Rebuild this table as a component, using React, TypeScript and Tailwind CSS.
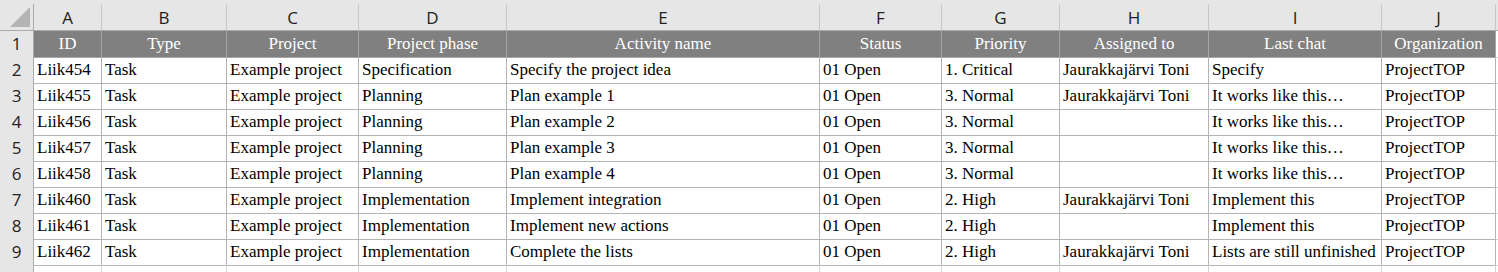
import React from "react";

const cols = [68, 125, 132, 148, 313, 122, 118, 149, 173, 114];
const letters = ["A", "B", "C", "D", "E", "F", "G", "H", "I", "J"];
const headers = [
  "ID",
  "Type",
  "Project",
  "Project phase",
  "Activity name",
  "Status",
  "Priority",
  "Assigned to",
  "Last chat",
  "Organization",
];
const rows: string[][] = [
  ["Liik454", "Task", "Example project", "Specification", "Specify the project idea", "01 Open", "1. Critical", "Jaurakkajärvi Toni", "Specify", "ProjectTOP"],
  ["Liik455", "Task", "Example project", "Planning", "Plan example 1", "01 Open", "3. Normal", "Jaurakkajärvi Toni", "It works like this…", "ProjectTOP"],
  ["Liik456", "Task", "Example project", "Planning", "Plan example 2", "01 Open", "3. Normal", "", "It works like this…", "ProjectTOP"],
  ["Liik457", "Task", "Example project", "Planning", "Plan example 3", "01 Open", "3. Normal", "", "It works like this…", "ProjectTOP"],
  ["Liik458", "Task", "Example project", "Planning", "Plan example 4", "01 Open", "3. Normal", "", "It works like this…", "ProjectTOP"],
  ["Liik460", "Task", "Example project", "Implementation", "Implement integration", "01 Open", "2. High", "Jaurakkajärvi Toni", "Implement this", "ProjectTOP"],
  ["Liik461", "Task", "Example project", "Implementation", "Implement new actions", "01 Open", "2. High", "", "Implement this", "ProjectTOP"],
  ["Liik462", "Task", "Example project", "Implementation", "Complete the lists", "01 Open", "2. High", "Jaurakkajärvi Toni", "Lists are still unfinished", "ProjectTOP"],
];

const gridCols = "grid-cols-[34px_68px_125px_132px_148px_313px_122px_118px_149px_173px_114px_1fr]";

export default function App() {
  return (
    <div className="w-[1498px] h-[272px] overflow-hidden bg-white">
      {/* Column letters */}
      <div className={`grid ${gridCols} h-[31px] bg-[#e6e6e6] border-b border-[#ababab]`}>
        <div className="relative border-r border-[#ababab] mt-[4px]">
          <svg className="absolute right-[3px] bottom-[3px]" width="20" height="20" viewBox="0 0 20 20">
            <polygon points="20,0 20,20 0,20" fill="#b4b4b4" />
          </svg>
        </div>
        {letters.map((l) => (
          <div
            key={l}
            className="mt-[4px] border-r border-[#c8c8c8] flex items-center justify-center text-[length:17px] text-[#222] font-['Open_Sans',sans-serif] leading-none"
          >
            {l}
          </div>
        ))}
        <div className="mt-[4px]" />
      </div>
      {/* Header row */}
      <div className={`grid ${gridCols} h-[26px]`}>
        <div className="bg-[#e6e6e6] border-r border-b border-[#ababab] flex items-center justify-center text-[length:17px] text-[#222] font-['Open_Sans',sans-serif]">
          1
        </div>
        {headers.map((h) => (
          <div
            key={h}
            className="bg-[#808080] border-r border-b border-[#a6a6a6] flex items-center justify-center text-white text-[length:17px] font-['Liberation_Serif',serif] whitespace-nowrap overflow-hidden"
          >
            {h}
          </div>
        ))}
        <div className="border-b border-[#d4d4d4]" />
      </div>
      {rows.map((r, i) => (
        <div key={i} className={`grid ${gridCols} h-[26px]`}>
          <div className="bg-[#e6e6e6] border-r border-b border-[#ababab] flex items-center justify-center text-[length:17px] text-[#222] font-['Open_Sans',sans-serif]">
            {i + 2}
          </div>
          {r.map((c, j) => (
            <div
              key={j}
              className="border-r border-b border-[#b4b4b4] flex items-center pl-[3px] text-black text-[length:17px] font-['Liberation_Serif',serif] whitespace-nowrap overflow-hidden"
            >
              {c}
            </div>
          ))}
          <div className="border-b border-[#d4d4d4]" />
        </div>
      ))}
      <div className={`grid ${gridCols} h-[26px]`}>
        <div className="bg-[#e6e6e6] border-r border-[#ababab]" />
        {cols.map((_, j) => (
          <div key={j} className="border-r border-[#d4d4d4]" />
        ))}
        <div />
      </div>
    </div>
  );
}
